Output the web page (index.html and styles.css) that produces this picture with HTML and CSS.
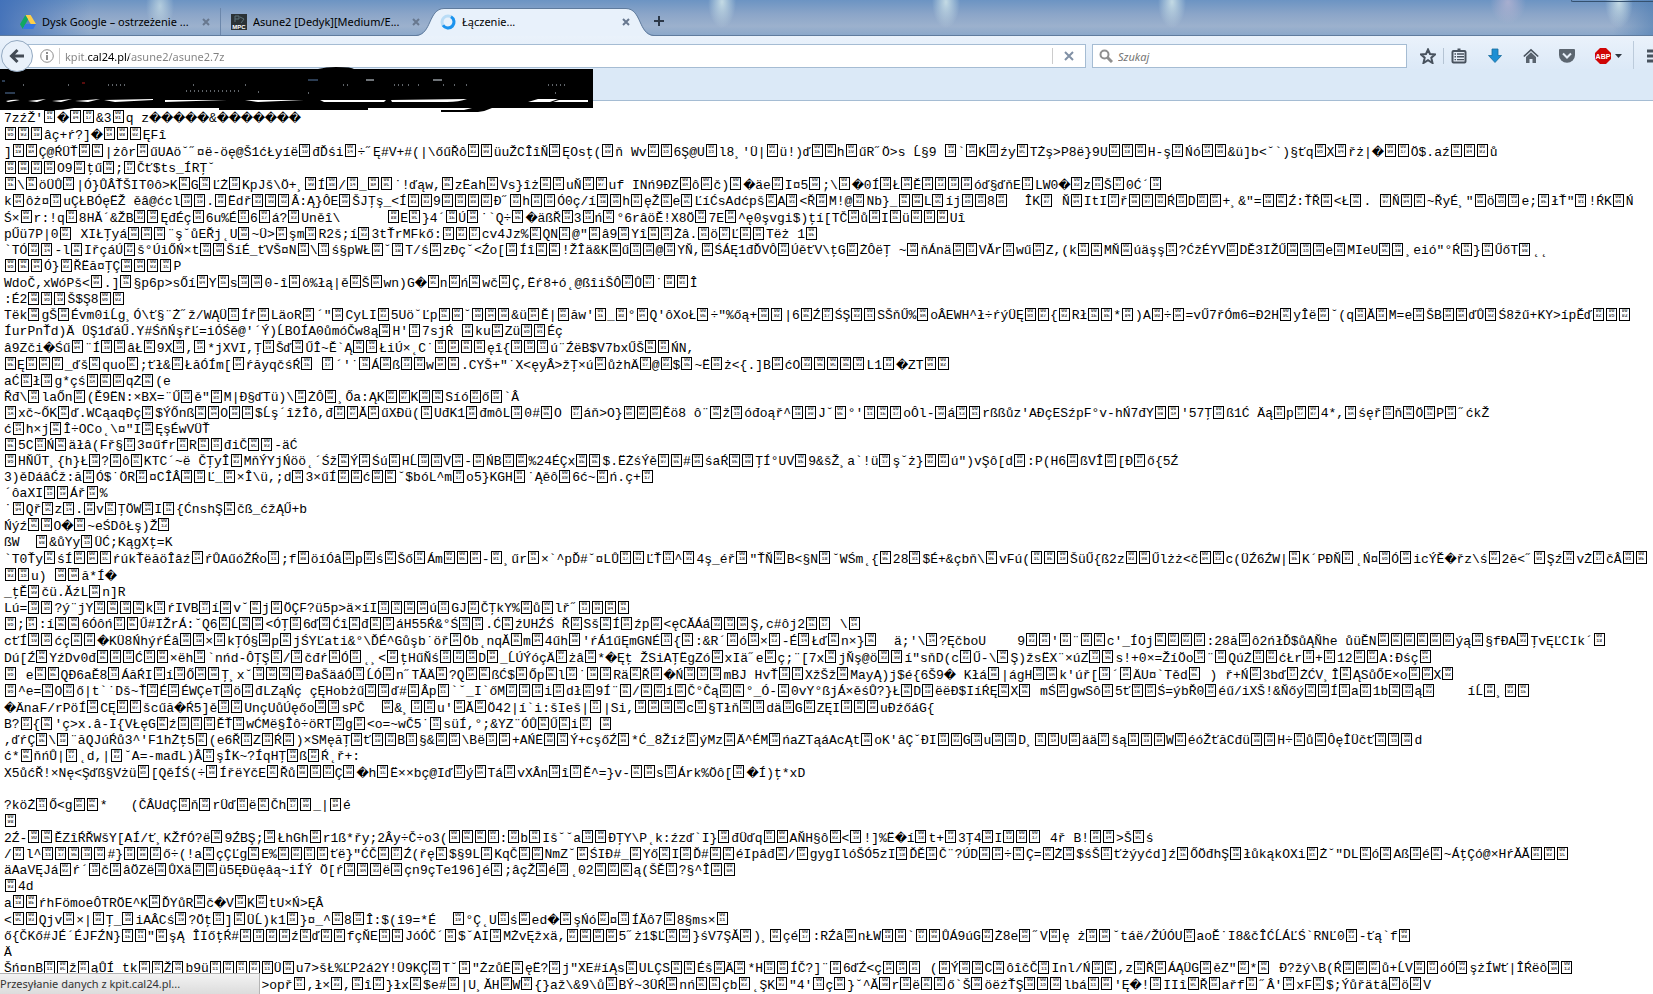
FILE: index.html
```html
<!DOCTYPE html>
<html lang="pl">
<head>
    <meta charset="UTF-8">
    <meta name="viewport" content="width=device-width, initial-scale=1.0">
    <title>Łączenie...</title>
    <link rel="stylesheet" href="styles.css">
</head>
<body>
    <header class="browser">
        <div class="tab-bar">
            <div class="tab">
                <svg class="tab-icon" viewBox="0 0 16 16">
                    <path d="M5.4 1h5.2L16 10h-5.3z" fill="#ffcf48"/>
                    <path d="M5.4 1L0 10.2 2.7 15 8 5.6z" fill="#11a861"/>
                    <path d="M5.4 10H16l-2.7 5H2.7z" fill="#3777e3"/>
                </svg>
                <a class="tab-title" href="#">Dysk Google – ostrzeżenie ...</a>
                <button class="tab-close" aria-label="Zamknij kartę"><svg viewBox="0 0 8 8"><path d="M1 1l6 6M7 1L1 7"/></svg></button>
            </div>
            <div class="tab divided">
                <svg class="tab-icon" viewBox="0 0 16 16">
                    <rect width="16" height="16" fill="#2b3236"/>
                    <path d="M4 2v6M4 2h4v3H4M9 3l4 2-3 4" stroke="#5d7178" fill="none"/>
                    <text class="mpc" x="8" y="15">MPC</text>
                </svg>
                <a class="tab-title" href="#">Asune2 [Dedyk][Medium/E...</a>
                <button class="tab-close" aria-label="Zamknij kartę"><svg viewBox="0 0 8 8"><path d="M1 1l6 6M7 1L1 7"/></svg></button>
            </div>
            <div class="tab active">
                <svg class="tab-shape" viewBox="0 0 238 28">
                    <path d="M0 28C16 27 12 1 28 .5H210C226 1 222 27 238 28z" fill="#e8f1fb"/>
                    <path d="M0 27.5C16 26.5 12 1 28 .5H210C226 1 222 26.5 238 27.5" fill="none" stroke="#5f7b9d"/>
                </svg>
                <svg class="tab-icon" viewBox="0 0 16 16">
                    <circle cx="8" cy="8" r="6" fill="none" stroke="#b9dcf6" stroke-width="3"/>
                    <path d="M11 2.8A6 6 0 1 1 3 11.3" fill="none" stroke="#1b93ee" stroke-width="3"/>
                </svg>
                <a class="tab-title" href="#">Łączenie...</a>
                <button class="tab-close" aria-label="Zamknij kartę"><svg viewBox="0 0 8 8"><path d="M1 1l6 6M7 1L1 7"/></svg></button>
            </div>
            <button class="new-tab" aria-label="Nowa karta"><svg viewBox="0 0 10 10"><path d="M5 0v10M0 5h10"/></svg></button>
            <div class="window-controls"></div>
        </div>

        <div class="nav-bar">
            <button class="back-btn" aria-label="Wstecz">
                <svg viewBox="0 0 16 16"><path d="M15 8H3M8.500 2L2.500 8l6 6" fill="none" stroke="#434b55" stroke-width="3"/></svg>
            </button>
            <div class="url-bar">
                <svg class="info-icon" viewBox="0 0 14 14">
                    <circle cx="7" cy="7" r="6.300" fill="none" stroke="#8d8d8d"/>
                    <path d="M7 6v5M7 3v2" stroke="#8d8d8d" stroke-width="2"/>
                </svg>
                <input type="text" class="url-input" aria-label="Adres" value="kpit.cal24.pl/asune2/asune2.7z">
                <button class="stop-btn" aria-label="Zatrzymaj"><svg viewBox="0 0 10 10"><path d="M1 1l8 8M9 1L1 9"/></svg></button>
            </div>
            <div class="search-bar">
                <svg class="search-icon" viewBox="0 0 14 14">
                    <circle cx="5.500" cy="5.500" r="4" fill="none" stroke="#8f8f8f" stroke-width="2"/>
                    <path d="M8.500 8.500L13 13" stroke="#8f8f8f" stroke-width="3"/>
                </svg>
                <input type="text" class="search-input" aria-label="Szukaj" placeholder="Szukaj">
            </div>
            <div class="tools">
                <button class="tool star" aria-label="Dodaj zakładkę">
                    <svg viewBox="0 0 16 16"><path d="M8 1.500l2 4.500 5 .5-3.700 3.200L12.500 15 8 12.200 3.500 15l1.200-5.300L1 6.500 6 6z" fill="none" stroke="#48525e" stroke-width="2"/></svg>
                </button>
                <button class="tool" aria-label="Zakładki">
                    <svg viewBox="0 0 16 16">
                        <path d="M5 3V2h1.500V.5h3V2H11v1" fill="#48525e"/>
                        <rect x="1.500" y="3" width="13" height="11.500" rx="1" fill="#e6eef8" stroke="#48525e" stroke-width="2"/>
                        <path d="M3.500 6h1.500M6 6h7M3.500 8.800h1.500M6 8.800h7M3.500 11.600h1.500M6 11.600h7" stroke="#48525e" stroke-width="1.400"/>
                    </svg>
                </button>
                <button class="tool" aria-label="Pobrane pliki">
                    <svg viewBox="0 0 16 16"><path d="M5 1h6v6.500h3.500L8 14.500 1.500 7.500H5z" fill="#1d8fd4" stroke="#1a6c9d" stroke-width=".8"/></svg>
                </button>
                <button class="tool" aria-label="Strona startowa">
                    <svg viewBox="0 0 16 16">
                        <path d="M.8 8.500L8 1.800l7.200 6.700" fill="none" stroke="#4a545f" stroke-width="1.600"/>
                        <path d="M3 9l5-4.700L13 9v6H9.500v-4h-3v4H3z" fill="#59636e"/>
                    </svg>
                </button>
                <button class="tool" aria-label="Pocket">
                    <svg viewBox="0 0 16 16">
                        <path d="M1 1h14q1 0 1 1v5a8 7.700 0 0 1-16 0V2q0-1 1-1z" fill="#5c6670"/>
                        <path d="M4 5.500l4 4 4-4" fill="none" stroke="#e6eef8" stroke-width="2"/>
                    </svg>
                </button>
                <button class="tool abp" aria-label="Adblock Plus">
                    <svg viewBox="0 0 16 16">
                        <path d="M5 0h6l5 5v6l-5 5H5l-5-5V5z" fill="#d00505"/>
                        <text class="abp-label" x="8" y="11">ABP</text>
                    </svg>
                    <svg class="caret" viewBox="0 0 7 4"><path d="M0 0h7L3.500 4z" fill="#2d3640"/></svg>
                </button>
                <button class="tool menu" aria-label="Otwórz menu">
                    <svg viewBox="0 0 16 16"><path d="M0 3h16M0 8h16M0 13h16" stroke="#48525e" stroke-width="3"/></svg>
                </button>
            </div>
        </div>

        <div class="bookmarks-bar">
            <svg class="scribble" viewBox="0 0 593 44">
                <path d="M0 2H318Q326 0 336 0Q352 0 354 2H593V41H492Q486 44 478 45H441V43H464L472 41H368V43H219V41H74Q60 44 44 43L0 43z" fill="#000"/>
                <path d="M6 34q8-2 14-1l-12 2zM28 34l18-2-9 3zM52 34l20-2-11 3zM75 34l25-2-12 3zM104 33l49-1v1l-38 2zM165 33h62l-62 2zM245 33h59l-46 2zM320 33h66l-2 2h-60zM391 33l76-1q-8 3-20 3h-55zM528 35h22l8-3h-20zM559 33h29v2h-35z" fill="#fff"/>
                <path d="M2 14h3M5 26h10M308 13h10" stroke="#5678a4"/>
                <path d="M82 16h3" stroke="#b01818"/>
                <path d="M366 13h8M433 13h9" stroke="#dde6ef"/>
                <path d="M23 18h4M68 18h1M108 18h20M343 18h6M394 18h10M408 18h3M418 18h2M443 18h2M454 18h3M548 18h20M186 24h56M193 18h2M245 18h2M258 25h2M308 26h2M466 18h4M555 26h1" stroke="#bfc8d2" stroke-dasharray="1 3"/>
            </svg>
        </div>
    </header>

    <main class="page">
        <pre id="output" class="output"></pre>
    </main>

    <footer class="status">Przesyłanie danych z kpit.cal24.pl...</footer>

    <script type="text/plain" id="dump">
7zźŽ'□1C�□04□17&3□91q z�����&�������
□05□93□10âç+ŕ?]�□1A□08□02ĘFî
]□19□8AÇ@ŔÜŤ□90□0E|żôr□94űUAö˘˝¤ë-öę@Š1ćŁyíë□1DđĎśi□14÷˝Ę#V+#(|\őűŘô□83□90üuŽCÎîŇ□8AĘOsţ(□89ň Wv□93□156Ş@U□15l8¸'Ü|□93ü!)ď□1E□9Eh□10űR˝Ö>s Ĺ§9 □18`□94K□98źy□0CTŻş>P8ë}9U□03□18□98H-ş□83Ńó□1A□98&ü]b<˘`)§ťq□05X□04řż|�□99□17Ö$.aź□1E□84□93ů
□05□0B□93□95O9□8Dţű□98;□17Čť$ts_ÍRŢ˘
□1E\□1EöÜŮ□03|Ó}ŮÂŤŠIT0ô>K□9EG□1EĽŻ□1DKpJš\Ö+¸□99Í□88/□14_□8A□9C˙!ďąw,□8EzËah□93Vs}îż□9D□05uŇ□18□97uf INń9ĐZ□8Aô□04č)□0E�äe□93I¤5□99;\□19�0Í□18Ł□04Ě□04□13□19□89óď§ďňE□13LW0�□82z□81Š□070Ć´□18
k□04ôż¤□13uÇŁBÓęËŽ ěâ@ćcl□10□19.□98Ëdř□83□98□02Â:Ą}ÔE□99ŠJŢş_<Í□83□839□8D□10□88□82Đ˝□83h□91□10Ó0ç/í□1B□06h□93ęŽ□1Ee□0CĽíĆsAdćpš□9CA□91<Ř□98M!@□83Nb}_□1E□9BL□0Cíj□05□958□06  ÎK□97 Ň□04ItI□97ř□0B□97□92Ŕ□19D□91□1A+¸&"=□1B□9EŹ:ŤŘ□9B<Ł□9E. □97Ň□94□9C~ŘyÉ¸"□8Bö□05□13e;□9EłŤ"□81!ŔK□06Ń
Ś×□88r:!q□138HĂ´&ŽB□93□95ĘđÉç□966u%É□116□17á?□83Uněî\      □88E□9C}4´□1EÚ□9A˙`Q÷□9E�äßŘ□103□18ń□0C°6râöĚ!X8Ö□037E□0A^ę0şvgi$)ţí[TČ□04ů□98I□1Eü□02□19□90Uî
pŰü7P|0□93 XIŁŢyá□98□94□98¨ş˘ůEŘj˛U□8D~Ü>□94şm□18R2š;í□833tŤrMFkő:□19□83□17cv4Jz%□8CQN□91@"□96â9□96Yî□0B□14Żâ.□91ö□97Ľ□89□96Tëż 1□0E
`TÓ□83□14-l□0EIřçáÚ□83š°ÚiŐŃ×t□93□0DŠíÉ_ťVŠ¤N□1B\□11ś§pWŁ□98˘□1BT/ś□94zĐç˘<Źo[□99Íî□0E□9E!ŽÎä&K□0Eű□11□8A@□10YŇ,□98ŚÁĘ1đĎVÔ□93ÚěťV\ţG□02ŻÔëŢ ~□0DňÁnä□8A□13VĂr□91wű□94Z,(k□03□9EMŇ□9Búäşş□14?ĆžÉYV□05DĚ3IŽŰ□0B□15□98e□81MIeU□9C□1B¸eió"°Ŕ□1E}□1EŰőT□98˛˛
□05□9E□94Ó}□83ŘËă¤ŢÇ□9A□04□03□1CP
WdoČ,xWóPš<□99.]□1E§p6p>sŐí□04Y□1Es□18□0A0-î□98ô%łą|ě□82Š□8Awn)G�□9Cn□93ń□9Ewč□93Ç,Ëŕ8+ó˛@ßîiŠÔ□97Ů□07˙□1B□91Î
:É2□0B□95□19Š$Ş8□06□03
Tëk□9BgŠ□98Évm0iĹg¸Ó\ť§¨Ż˝ž/WĄÜ□11Íř□99LäoR□8A´"□8ACyLI□835Uö˘Ľp□1E□98˘□8D□94□98&ü□84Ě|□95ăw'□1E_□8D°□94Q'ôXoŁ□0E÷"%őą+□98□92|6□8EŹ□17ŚŞ□83□11SŠňŰ%□9AoÂEWH^ł÷ŕýÜĘ□05□87{□93Rł□1E□8E*□84)A□9D÷□9A=vŰ7řÓm6=Đ2H□9CyÎë□99˘(q□05Ă□18M=e□98ŠB□9A□8AďŮ□02Ś8žű+KY>ípĚď□82□05□03
ÍurPnŤd)Ä ÜŞ1ďáŰ.Y#ŚňŃşřĽ=iÓŚě@'´Ý)ĹBOÍA0ůmóČw8ą□9BH'□117sjŔ □8Bku□8AZü□05□91Éç
â9Zči�Śű□94¨Í□10□8AâŁ□9E9X□1A,□1A*jXVI,Ţ□19Šď□98ŰÎ~Ě`Ą□9E□15ŁiÚ×˛C˙□11□8A□8E□9Dęî{□19□18□11ú¨ŹëB$V7bxŰŠ□0E□91ŃN,
□0EĘ□10□04□93_ďš□0Cquo□8C;ťł&□91ŁăÓÍm[□04ŕăyqčśŔ□1E □17´'˙□1EÁ□8Aß□13□93w□8A□98.CYŠ+"˙X<ęyÂ>žŢ×ú□94ůżhÄ□17@□83$□0E~Ë□05ż<{.]B□9AćO□83□9E□9C□8E□93L1□83�ZT□06□82
aĆ□1Eł□18g*çś□1A□0E□8AqŻ□9E(e
Řđ\□91laŐn□88(Ě9ËN:×BX=¨Ű□13ě"□85M|Đ§ďTü)\□1BŻÔ□0B¸Őa:ĄK□93□97K□98□9ESíó□83ő□10`Â
□1Axč~ŐK□1Eď.WCąaqĐç□93$ÝŐnß□8E□04O□98□8A$Ĺş´îžÎô,đ□93□07Ă□94űXĐü(□1EUđK1□88đmôL□180#□0EO □17áň>O}□05□92□89Ěö8 ô¨□8Ež□15óđoąř^□1B□90J˘□0E°'□11□1E□17oÔl-□90á□13□81rßßůz'AĐçESźpF°v-hŃ7đY□0B□1A'57Ţ□05ß1Ć Äą□81p□17□874*,□8Aśęř□15ň□9EÖ□1EP□18˝ćkŽ
ć□14h×j□9EÎ÷OCo˛\¤"I□8AĘşÉwVÜŤ
□0E5C□11Ń□0Eäłâ(Fř§□133¤űfr□81R□1E□15điČ□0C□93-äĆ
□95HŇŰT¸{h}Ł□1B?□98ô□1CKTC´~ë ČŢyÎ□83MňÝYjŃöö˛´Śž□8EÝ□94Śú□91HĹ□1D□81V□04-□0AŃB□13□8A%24ÉÇx□8E□8E$.ËŻśÝě□97□0E#□96śaŔ□0E□98ŢÍ°UV□8E9&šŽ¸a`!ü□17ş˘ż}□92□93ú")vŞô[d□8D:P(H6□9AßVÎ□98[Đ□97ő{5Ź
3)ěDáâĆž:ă□98Ó$˙ÖR□93¤CÎÂ□98□1DĽ_□04×Î\ü,;d□943×űÍ□92□88ć□8D□8E˘$bóL^m□17o5}KGH□88˙Ąěô□896ć~□91ń.ç+□17
´ôaXI□15□19Ář□18%
˙□94Qř□9Cz□14.□99v□1CŢÖW□94I□1E{ĆnshŞ□9Ečß_ćžĄŰ+b
Ńýź□0C□88O�□88~eŚDôŁş)Ž□13
ßW  □08&ůYy□15ÜĆ;KągXţ=K
`T0Ťy□0CśÍ□04□94□1CŕúkŤëăöÎâź□14ŕŮAűóŽŔo□11;f□8BöíÓâ□04p□91ś□93Šő□1EÁm□02□0E□84-□91¸űr□1E×`^pĎ#˘¤LŮ□17□03ĽŤ□11^□914ş_éř□18"ŤŇ□92B<§N□18˘WŚm˛{□9E28□81$É+&çbň\□0EvFú(□1C□9E□19ŠüŰ{ß2z□03□9BŰlżż<č□84□13c(ÜŹ6ŹW|□8EK´PĐŇ□83˛Ń¤□05Ó□0AicÝĚ�řz\ś□932ě<˝□05Şź□91vŻ□17čÂ□05□9E
□93□15u) □06□0Aă*Í�
_ţĚ□99čü.ĂźL□8An]R
Lú=□10□85?ý¨jY□93□0E□1B□0Ek□11ŕIVB□17í□98v˘□0Ej□98ÖÇF?ü5p>ä×íI□11□1C□98□04ú□11GJ□93ČŢkY%□98ů□1Elř˝□13□98□94□1E
□05;□14:í□9E□0E6Óôń□13□0EŰ#IŽrÁ:˘Q6□93Ĺ□8E□8A<ÓŢ□1D6ď□93Ćî□9Eđ□8C□1AáH55Ŕ&°Ś□11□14.Ć□0EźUHŹŚ Ř□93Sš□0EÍ□04źp□98<ęCĂÁá□93□13□8AŞ,c#ôj2□1E□17 \□14
cťÍ□10□95ćç□0E□98�KÜ8ŃhýŕÉâ□98□1B×□18kŢÓ§□98p□0EjŚYĽati&°\ĎÉ^Gůşb˙öř□94Öb˛nqĂ□8Em□944űh□88'ŕÁ1űĘmGNÉ□11{□0E:&R´□91ó□1A×□13-É□14Łď□0En×}□9E  ä;'\□14?ĘčboU    9□93□91'□93¨□91□9Cc'_ÍOj□9E□02□93□19:28ă□18ô2ńłĎ$ůĄŇhe ůüĚN□0A□9E□98□0E□98□82ýą□88§fĐA□93ŢvĘĽCIk´□18
Dú[Ź□0EYźDv0đ□0E□98□1DĆ□14□98×ëh□1B`nńd-ÔŢŞ□1C/□10čđŕ□98Ó□18˛¸<□8DţHűŇś□15□93□1AD□8A_ĹÚÝóçÄ□17żâ□08*�Ęţ ŽSiAŢËgZó□98xIä˝e□8Aç;¨[7x□9EjŇş@ö□83□98í"sňD(c□83Ű-\□9EŞ)žsËX¨×úZ□13□9Es!+0×=ŽíÖo□14¨□88QúŻ□11□03ćŁr□18+□9312□94□13A:Đśç□14
□05 e□1E□8EQĐ6aĚ8□11ÁăŔI□1Dí□19Ő□04□0BŢ¸x˘□18□02□93□82ĐaŠäáÓ□11ĹÓ□88n˝TĂÄ□98?Q□1A□8EßĆ$□98Őp□0El□93˙□1B□18Rä□9CŘ□18�Ń□18□17□10mBJ HvŤ□18□81XžŠž□98MayĄ)j$é{6Š9� Kłá□9B|ágH□05□0Ak'úř[□19´□04ÄU¤`Těd□0E ) ř+Ń□053bď□17ŻĆV¸Î□9EĄSůŐE×o□1B□99X□02
□95^e=□8EO□83ő|t`˙Dš~Ť□83É□94ÉWÇeT□05ö□98đLZąŃç çĘHobżű□93□18ď#□8DÂp□11`˘_I`őM□07□10□18i□8Adł□919Í¨□8E/□9E□93í□8AČ°Čą□93□0E°_Ó-□9E0vY°ßjÁ×ěśŮ?}Ł□8ED□1DëëĐ$IíŔĘ□0EX□0E mŚ□04gwSô□055ť□1B□1AŚ=ýbŘ0□92éű/iXŠ!&Ňőý□0C□99Í□10a□931b□9E□82ą□93    íĹ□8B¸□83□1E
�ÄnaF/rPöÍ□0ACĘ□83□07šcűă�Ŕ5]ě□15□93UnçUůÚęőo□98□18sPČ  □0A&¸□13□91u'□0AĂ□88Ö42|í`i:šIeš|□13|Si,□19□8A□1B□0Ec□18§Tłň□1E□1Adä□19G□93ZĘI□10□9E□98uĐźőáG{
B?□13{□0E'ç>x.â-I{VŁęG□0Eź□18□11□18ĚŤ□18wĆMë§Îô÷öRT□93g□8A<o=~wČ5˙□11süÍ,°;&YZ¨ÓŮ□0EŰ□1Ei□17 □0A
,ďŕÇ□0E\□1D¨ăQJúŔů3^'F1hŻţ5□8C(e6Ř□11Z□18Ŕ□98)×SMęăŢ□8Dť□10□93B□15§&□98□10\Bë□1A□0A+AŃË□8D□1EÝ+cşőŹ□98*Ć_8Žíź□1EýMz□8AÄ^ÉM□10ńaZTąáAcĄt□98oK'âÇ˘ĐI□19□93G□1Au□0A□18D¸□1C□1AU□05ää□97šą□88□19□8AW□03éóŽťăCđü□98□89H÷□1Eů□9BÔęÎÜčť□81□15□98d
ć*□0EňńŮ|□17˛d,|□83˘A=-mađL)Â□11şÎK~?ÍqHŢ□18ß□92Ŕ˛ř+:
X5ůćŘ!×Nę<Şďß§Vżü□85[QěÍŚ(÷□98ÍřëYčE□0CŘů□9B□18□93Ç□98�h□1CË××bç@Iď□13ý□0ATá□91vXÂn□19î□17Ě^=}v-□0C□99s□11Árk%Öô[□81�Í)ţ*xD

?köŻ□11Ő<g□95□0E*   (ČÂUdÇ□05ň□83rÜď□11ë□0CČh□17□9D_|□8Aé
□98
2Ź-□9D□0EĚZîŔŘWšY[AÍ/ť¸KŽfÓ?ë□8E9ŹBŞ;□8AŁhGh□8Ar1ß*řy;2Ây÷Č÷o3(□1B□0E□9E□11:□93b□1EIš˘˘a□15□88ĐŢY\P˛k:źzď`I}□1BđÜďq□11□88AŇH§ô□93<□19!]%Ë�í□18t+□133Ţ4□8AI□13□83□17 4ř B!□96□04>Š□9Cś
/□93l^□11□17□9E□18□93#}□18□98□83ő÷(!a□0EçÇĽg□8EE%□98□02□11□18ťë}"ĆČ□98□17Ź(řę□0C$§9L□8AKqČ□18□98NmZ˘□8AŚIĐ#_□98Yő□9CI□95Ď#□98□8EéIpâđ□8E/□18gygIlóŠÓ5zI□18ĎĚ□1BČ¨?ÚD□98□84÷□9EÇ=□0CŻ□98$śŠ□11ťżýyćd]ź□1EŐÖđhŞ□1BłůkąkOXi□81Ż˘"DL□1Eó□0EAß□18é□9E~ÁţÇó@×HŕĂĂ□91□82□1C
äAaVĘJá□93ŕ´□15č□98âÖZë□98ŮXä□07□05ü5ĘĐüęâą~iÍÝ Ö[ŕ□10□8A□83ë□98çn9çTe196]é□0C;âçŽ□0Eé□95˛02□98□93□9Cą(ŠĚ□13?§^Î□89□0A
□934d
a□18□8EŕhFömoeÔTRÖE^K□8AĎYůR□8Eč�V□18K□92tU×Ń>ĘÂ
<□0C□93Qjv□0A×|□98Ţ_□88iAÂCś□19?Öţ□15]□8CÜĹ)k1□18}¤_^□028□1DÎ:$(î9=*É  □19°Ç˛U□11ś□9Ded�□84şŃó□92¤□11ÍĂô7□1E8§ms×□11
ő{ČKő#JÉ´ÉJFŹN}□1E□11"□98şĄ ÎIőţŔ#□8A□18□82□88ź□1Eď□93□98fçŇE□18□98JóÓČ´□95$˘AI□18MŻvĘžxä,□93□0B□8A□895˝ż1$Ľ□0C□93}śV7ŞĂ□94)¸□98çé□17:RŹâ□98nŁW□18□88`□17□98ŮÁ9úG□93Ż8e□95˝V□88ę ż□18□8A˘táë/ŽÚÓU□11aoĚ˙I8&čÎĆĹÁĽŚ`RNĽ0□13-ťą`f□98
Ä
Šń¤nB□11□0Cž□91ąŮÍ tk□98□1CŽ□05b9ü□11□02□11□83□11Ü□98u7>šŁ%ĽP2á2Y!Ü9KÇ□83T˘□1B"ŻzůË□8EęË?□93j"XE#íĄs□1EULÇS□8E□0EÉš□98Ä□8A*H□15□05ÍČ?]¨□886ďŹ<ç□94□14□91 (□98Ý□05□88C□98ôîčČ□11Inl/Ń□18□1E,z□1EŘ□8AÁĄÜG□8AěZ"□92*□9E Đ?žý\B(Ŕ□1B□8A□92ů+ĹV□98□13óÓ□93şżÍWť|ÎŔëô□8A□13
                                 >opř□11,ł×□93,□1Eî□93}łx□0C$e#□18|U¸ĂH□8AW□97{}až\&9\ů□11BÝ~3ÜŔ□8Anń□0C□1Eçb□83˛ŞK□93"4'□11ç□8A}˘^Ă□98r□18ë□9C□0Cő`Š□98öëźŤŞ□18□15□93lbá□11□98'Ę�!□15IIî□0CŘ□18ařf□83˝Â'□94xF□9C$;Ýůřätâ□07ö□92V
</script>
    <script>
        const output = document.getElementById('output');
        const dump = document.getElementById('dump').textContent.replace(/^\n/, '');

        function addSpan(parent, className, text) {
            const span = document.createElement('span');
            span.className = className;
            span.textContent = text;
            parent.appendChild(span);
            return span;
        }

        // □XX is a control character, shown as a small box with its code
        dump.split(/((?:□[0-9A-F]{2})+|\uFFFD)/).forEach((part, i, parts) => {
            if (part.startsWith('□')) {
                // a lone character sits tight between two boxes
                const lone = parts[i + 1].length === 1;
                const group = addSpan(output, lone ? 'hexgroup tight' : 'hexgroup', '');
                part.slice(1).split('□').forEach(code => {
                    const box = addSpan(group, 'hexbox', '');
                    addSpan(box, 'digits', '00');
                    addSpan(box, 'digits', code);
                });
            } else if (part === '\uFFFD') {
                addSpan(output, 'invalid', part);
            } else {
                output.appendChild(document.createTextNode(part));
            }
        });
    </script>
</body>
</html>
```
FILE: styles.css
```css
* {
    box-sizing: border-box;
    margin: 0;
    padding: 0;
}

body {
    height: 100vh;
    overflow: hidden;
    background-color: #fff;
    font-family: "Noto Sans", "Open Sans", sans-serif;
    font-size: 11px;
    color: #000;
}

button {
    border: none;
    background: none;
    cursor: pointer;
}

svg {
    display: block;
}

.tab-bar {
    position: relative;
    display: flex;
    align-items: flex-end;
    height: 36px;
    padding-left: 10px;
    border-bottom: 1px solid #5f7b9d;
    background:
        radial-gradient(ellipse 14px 26px at 160px 6px, rgba(205, 226, 232, 0.7), transparent),
        radial-gradient(ellipse 14px 26px at 722px 2px, rgba(205, 226, 232, 0.9), transparent),
        radial-gradient(ellipse 14px 26px at 946px 2px, rgba(205, 226, 232, 0.9), transparent),
        radial-gradient(ellipse 14px 26px at 1172px 2px, rgba(205, 226, 232, 0.9), transparent),
        radial-gradient(ellipse 18px 22px at 1508px 2px, rgba(205, 190, 215, 0.6), transparent),
        radial-gradient(ellipse 14px 26px at 1619px 2px, rgba(205, 226, 232, 0.9), transparent),
        linear-gradient(to right, rgba(62, 110, 184, 0.9), transparent 90px),
        linear-gradient(to left, rgba(74, 122, 176, 0.6), transparent 40px),
        linear-gradient(#6c94c3, #8ba5c8 40%, #9cb1cd 75%, #8ba8ca);
}

.window-controls {
    position: absolute;
    top: 0;
    right: 0;
    width: 82px;
    height: 2px;
    border-bottom: 1px solid #35516f;
    border-left: 1px solid #35516f;
    border-radius: 0 0 0 2px;
}

.tab {
    position: relative;
    display: flex;
    align-items: center;
    width: 210px;
    height: 27px;
    padding: 0 10px;
}

.tab.divided {
    border-left: 1px solid #6c87ab;
}

.tab.active {
    z-index: 1;
}

.tab-shape {
    position: absolute;
    left: -14px;
    bottom: -1px;
    width: 238px;
    height: 28px;
}

.tab-icon {
    position: relative;
    width: 16px;
    height: 16px;
    margin-right: 6px;
}

.mpc {
    font: bold 6px "Liberation Sans", sans-serif;
    fill: #fff;
    text-anchor: middle;
}

.tab-title {
    position: relative;
    flex: 1;
    overflow: hidden;
    white-space: nowrap;
    color: #000;
    text-decoration: none;
}

.tab-close {
    position: relative;
}

.tab-close svg {
    width: 8px;
    height: 8px;
    fill: none;
    stroke: #68788f;
    stroke-width: 2;
}

.new-tab {
    align-self: center;
    margin: 6px 0 0 14px;
}

.new-tab svg {
    width: 10px;
    height: 10px;
    stroke: #2c3848;
    stroke-width: 2;
}

.nav-bar {
    display: flex;
    align-items: center;
    height: 33px;
    padding-top: 7px;
    background: linear-gradient(#eaf2fb, #dce9f7);
}

.back-btn {
    z-index: 1;
    flex: none;
    display: flex;
    align-items: center;
    justify-content: center;
    width: 32px;
    height: 32px;
    margin: 0 -14px 0 1px;
    border: 1px solid #93a9c1;
    border-radius: 50%;
    background-color: #e9f1fa;
}

.back-btn svg {
    width: 16px;
    height: 16px;
}

.url-bar,
.search-bar {
    display: flex;
    align-items: center;
    height: 24px;
    border: 1px solid #a5bcd3;
    background-color: #fff;
}

.url-bar {
    flex: 1;
    margin-right: 6px;
    padding-left: 20px;
}

.search-bar {
    width: 315px;
    padding-left: 6px;
}

.info-icon,
.search-icon {
    flex: none;
    width: 14px;
    height: 14px;
}

input {
    flex: 1;
    min-width: 0;
    border: none;
    outline: none;
    background: none;
    font: inherit;
}

.url-input {
    height: 16px;
    margin-left: 5px;
    padding-left: 5px;
    border-left: 1px solid #ccc;
    color: transparent;
    /* only the domain is black */
    background: linear-gradient(to right, #808080 27px, #000 27px, #000 69px, #808080 69px);
    -webkit-background-clip: text;
    background-clip: text;
}

.stop-btn {
    display: flex;
    align-items: center;
    justify-content: center;
    width: 33px;
    height: 16px;
    border-left: 1px solid #ccc;
}

.stop-btn svg {
    width: 10px;
    height: 10px;
    stroke: #8090a5;
    stroke-width: 2;
}

.search-input {
    margin-left: 5px;
    font-style: italic;
}

.search-input::placeholder {
    color: #737373;
}

.tools {
    display: flex;
    align-items: center;
    height: 24px;
    padding-left: 13px;
}

.tool {
    display: flex;
    align-items: center;
    height: 16px;
    margin-right: 20px;
}

.tool svg {
    width: 16px;
    height: 16px;
}

.star {
    margin-right: 7px;
    padding-right: 7px;
    border-right: 1px solid #b5c4d4;
    box-sizing: content-box;
}

.abp {
    margin-right: 11px;
}

.abp-label {
    font: bold 7px "Liberation Sans", sans-serif;
    fill: #fff;
    text-anchor: middle;
}

.tool .caret {
    width: 7px;
    height: 4px;
    margin-left: 4px;
}

.menu {
    width: 20px;
    height: 30px;
    margin-right: 0;
    padding-left: 13px;
    overflow: hidden;
    border-left: 1px solid #bccbdb;
}

.menu svg {
    flex: none;
}

.bookmarks-bar {
    position: relative;
    height: 32px;
    border-bottom: 1px solid #a5bcd3;
    background-color: #dbe9f7;
}

.scribble {
    position: absolute;
    top: -2px;
    left: 0;
    width: 593px;
    height: 44px;
    overflow: visible;
}

.page {
    padding: 9px 4px 0;
}

.output {
    font-family: "Liberation Mono", "Courier New", monospace;
    font-size: 13px;
    line-height: 16px;
    white-space: pre;
}

.hexgroup {
    display: inline-flex;
    gap: 2px;
    height: 13px;
    margin: 0 2px 0 1px;
    vertical-align: top;
}

.hexgroup.tight {
    margin-right: 1px;
}

.hexbox {
    display: flex;
    flex-direction: column;
    align-items: center;
    width: 11px;
    height: 13px;
    border: 1px solid #000;
    font-size: 5px;
    font-weight: bold;
    line-height: 5px;
    color: #444;
}

.digits {
    height: 5px;
    overflow: hidden;
}

.invalid {
    display: inline-block;
    width: 12px;
    font-family: "DejaVu Sans", sans-serif;
    font-size: 12px;
    line-height: 17px;
}

.status {
    position: fixed;
    left: 0;
    bottom: 0;
    width: 260px;
    height: 21px;
    border-top: 1px solid #b4b4b4;
    border-right: 1px solid #b4b4b4;
    background: linear-gradient(#f3f3f3, #dcdcdc);
    line-height: 20px;
    color: #333;
}
```
